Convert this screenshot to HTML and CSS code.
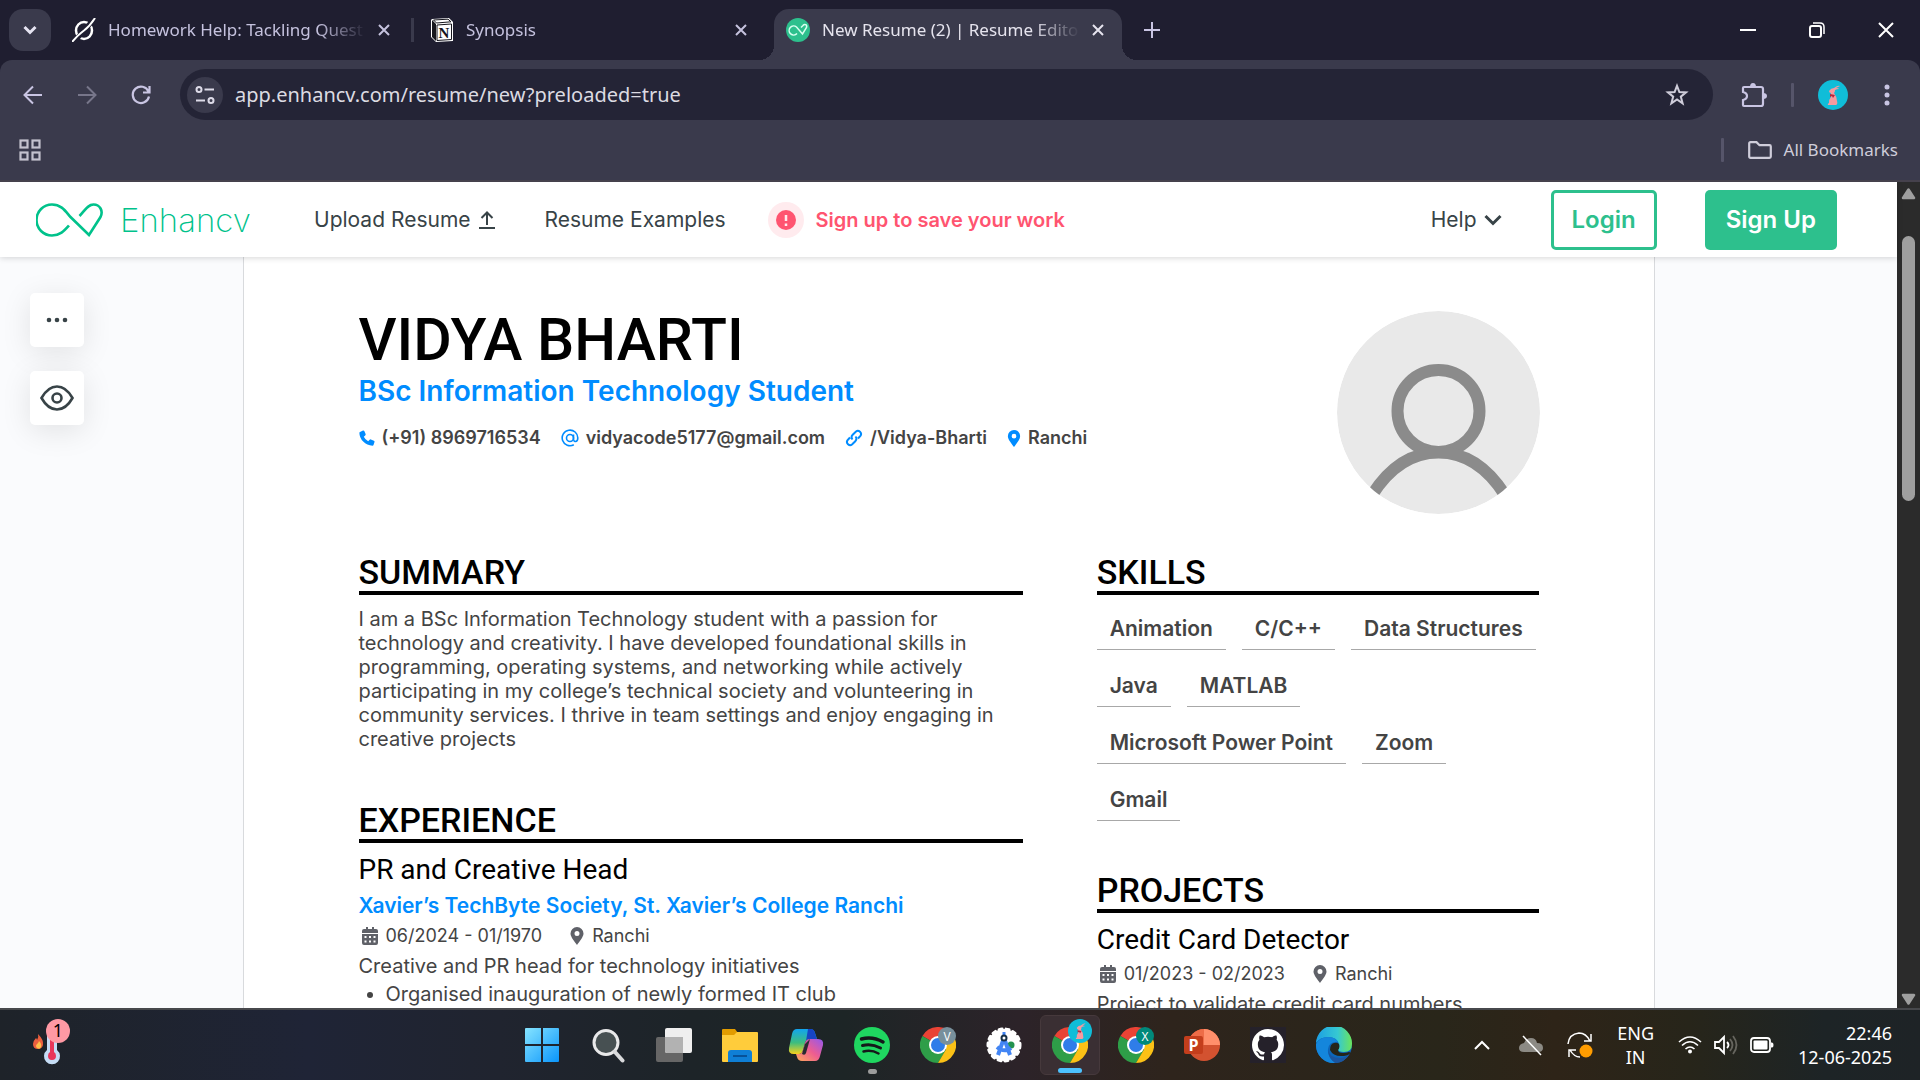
FILE: index.html
```html
<!DOCTYPE html>
<html lang="en">
<head>
<meta charset="utf-8">
<title>New Resume (2) | Resume Editor</title>
<link rel="stylesheet" href="styles.css">
</head>
<body>
<svg class="defs" width="0" height="0" aria-hidden="true">
  <symbol id="x" viewBox="0 0 14 14"><path d="M2 2l10 10M12 2L2 12" fill="none" stroke="currentColor" stroke-width="2"/></symbol>
  <symbol id="rabbit" viewBox="0 0 30 30"><circle cx="15" cy="15" r="15" fill="#10bdd8"/><path d="M11 11q2-3 5-3 4-3 6-2-2 1-4 2 3 0 3 1-2 0-4 1 0 2-1 3 3 4 3 8 1 3-1 4h-8q-1-1 1-2 0-4 2-6-1-2 0-4-2 0-2-2z" fill="#f79aa0"/><path d="M12 14l5 1-2 3-1-2-2 1z" fill="#b5283c"/></symbol>
  <symbol id="chrome" viewBox="0 0 36 36"><path d="M18 18L2.4 9A18 18 0 0 1 33.6 9z" fill="#ea4335"/><path d="M18 18L2.4 9A18 18 0 0 0 18 36l8-13z" fill="#2e9e48"/><path d="M18 9h15.600A18 18 0 0 1 18 36l8-13.500z" fill="#fbc116"/><circle cx="18" cy="18" r="9" fill="#fff"/><circle cx="18" cy="18" r="7" fill="#2f7de9"/></symbol>
  <symbol id="cal" viewBox="0 0 16 18"><path d="M4 0h2v2h4V0h2v2h2q2 0 2 2v2H0V4q0-2 2-2h2z" fill="#5f6168"/><path fill-rule="evenodd" d="M0 7h16v9q0 2-2 2H2q-2 0-2-2zM2.500 9v2h2V9zM7 9v2h2V9zM11.500 9v2h2V9zM2.500 13.500v2h2v-2zM7 13.500v2h2v-2zM11.500 13.500v2h2v-2z" fill="#5f6168"/></symbol>
  <symbol id="pin" viewBox="0 0 14 18"><path fill-rule="evenodd" d="M7 0a6.500 6.500 0 0 1 6.500 6.500C13.500 10 9 15 7 18 5 15 .5 10 .5 6.500A6.500 6.500 0 0 1 7 0zM7 4a2.500 2.500 0 1 0 0 5 2.500 2.500 0 0 0 0-5z" fill="currentColor"/></symbol>
</svg>

<div class="tabstrip">
  <button class="tab-search" aria-label="Search tabs"><svg width="14" height="10" viewBox="0 0 14 10"><path d="M1.500 2L7 7.500 12.500 2" fill="none" stroke="#e6e4f2" stroke-width="3"/></svg></button>
  <div class="tab">
    <svg class="fav" viewBox="0 0 24 24"><ellipse cx="12" cy="12.500" rx="8" ry="8.500" fill="none" stroke="#fff" stroke-width="2.500"/><path d="M22 1L2 24" stroke="#1f1e30" stroke-width="5"/><path d="M23 0Q18 8 12 12.500 7 16 0 24" fill="none" stroke="#fff" stroke-width="2"/></svg>
    <span class="tab-title">Homework Help: Tackling Quest</span>
    <button class="close" aria-label="Close tab"><svg width="14" height="14"><use href="#x"/></svg></button>
  </div>
  <div class="tab tab-second">
    <svg class="fav" viewBox="0 0 24 24"><path d="M2 1l17-1 4 4v19l-17 1-5-5V2z" fill="#fff"/><path d="M2 2l4 4v17l-4-4z" fill="#15151c"/><path d="M3.500 2L18 1.200 21 3.800 6.500 5z" fill="#fff" stroke="#15151c"/><path d="M7 7l14.500-1v15.500L7 22.500z" fill="#fff" stroke="#15151c"/><text x="14" y="20" text-anchor="middle" class="notion-n">N</text></svg>
    <span class="tab-title">Synopsis</span>
    <button class="close" aria-label="Close tab"><svg width="14" height="14"><use href="#x"/></svg></button>
  </div>
  <div class="tab active">
    <svg class="fav" viewBox="0 0 24 24"><circle cx="12" cy="12" r="12" fill="#2dc08d"/><path d="M11 15.500A4.500 4.500 0 1 1 10.500 9l6 7 4-6.500c1-3-2-4-3.500-2l-2 2" fill="none" stroke="#d8fff0" stroke-width="1.500"/></svg>
    <span class="tab-title">New Resume (2) | Resume Edito</span>
    <button class="close" aria-label="Close tab"><svg width="14" height="14"><use href="#x"/></svg></button>
  </div>
  <button class="new-tab" aria-label="New tab"><svg width="16" height="16" viewBox="0 0 16 16"><path d="M8 0v16M0 8h16" stroke="#c9c5e3" stroke-width="2"/></svg></button>
  <div class="window-controls">
    <button aria-label="Minimize"><svg width="16" height="16" viewBox="0 0 16 16"><path d="M0 8h16" stroke="#fff" stroke-width="2"/></svg></button>
    <button aria-label="Restore"><svg width="16" height="16" viewBox="0 0 16 16"><rect x="1" y="4" width="11" height="11" rx="2" fill="none" stroke="#fff" stroke-width="2"/><path d="M4 1h7q4 0 4 4v7" fill="none" stroke="#fff" stroke-width="1.500"/></svg></button>
    <button aria-label="Close"><svg width="16" height="16" viewBox="0 0 16 16"><path d="M1 1l14 14M15 1L1 15" stroke="#fff" stroke-width="2"/></svg></button>
  </div>
</div>

<div class="chrome-bar">
  <div class="toolbar">
    <button class="tool" aria-label="Back"><svg width="20" height="20" viewBox="0 0 20 20"><path d="M19 10H2M10 1.500L1.500 10l8.500 8.500" fill="none" stroke="#c9c5e3" stroke-width="2"/></svg></button>
    <button class="tool" aria-label="Forward"><svg width="20" height="20" viewBox="0 0 20 20"><path d="M1 10h17M10 1.500l8.500 8.500-8.500 8.500" fill="none" stroke="#77768a" stroke-width="2"/></svg></button>
    <button class="tool" aria-label="Reload"><svg width="20" height="20" viewBox="0 0 20 20"><path d="M17.500 6.500A8.200 8.200 0 1 0 18 11.500M18.500 1v6.500H12" fill="none" stroke="#c9c5e3" stroke-width="2.200"/></svg></button>
    <div class="omnibox">
      <button class="site" aria-label="Site information"><svg width="20" height="20" viewBox="0 0 20 20"><g fill="none" stroke="#dddbe8" stroke-width="2"><circle cx="4" cy="4.500" r="2.500"/><path d="M9.500 4.500H19M1 15.500h9"/><circle cx="16" cy="15.500" r="2.500"/></g></svg></button>
      <input type="text" aria-label="Address" value="app.enhancv.com/resume/new?preloaded=true">
      <button class="plain" aria-label="Bookmark"><svg width="24" height="24" viewBox="0 0 24 24"><path d="M12 2.800l2.400 6.300 6.600.3-5.200 4.200 1.800 6.700-5.600-3.800-5.600 3.800 1.800-6.700L3 9.400l6.600-.3z" fill="none" stroke="#cfcdda" stroke-width="2"/></svg></button>
    </div>
    <button class="plain ext" aria-label="Extensions"><svg width="26" height="26" viewBox="0 0 26 26"><path d="M3 5h17q2 0 2 2v15q0 2-2 2H3q-1 0-1-1v-5q4-1 4-4T2 10V6q0-1 1-1z" fill="none" stroke="#c9c5e3" stroke-width="2.200"/><path d="M9 5q0-4 3-4t3 4zM22 11q4 0 4 3t-4 3z" fill="#c9c5e3"/></svg></button>
    <span class="divider"></span>
    <button class="plain avatar" aria-label="Profile"><svg width="30" height="30"><use href="#rabbit"/></svg></button>
    <button class="plain menu" aria-label="Menu"><svg width="6" height="22" viewBox="0 0 6 22" fill="#c9c5e3"><circle cx="3" cy="3" r="2.500"/><circle cx="3" cy="11" r="2.500"/><circle cx="3" cy="19" r="2.500"/></svg></button>
  </div>
  <div class="bookmarks">
    <button class="plain" aria-label="Apps"><svg width="22" height="22" viewBox="0 0 22 22" fill="none" stroke="#c4c2ce" stroke-width="2.200"><rect x="1.500" y="1.500" width="7" height="7"/><rect x="13.500" y="1.500" width="7" height="7"/><rect x="1.500" y="13.500" width="7" height="7"/><rect x="13.500" y="13.500" width="7" height="7"/></svg></button>
    <span class="divider"></span>
    <button class="plain all"><svg width="24" height="18" viewBox="0 0 24 18"><path d="M1.200 15.500v-13q0-1.300 1.300-1.300h6l3 3h10q1.300 0 1.300 1.300v10q0 1.300-1.300 1.300h-19q-1.300 0-1.300-1.300z" fill="none" stroke="#cfcdda" stroke-width="2.200"/></svg>All Bookmarks</button>
  </div>
</div>

<main class="viewport">
  <div class="page">
    <header class="site-header">
      <a class="logo" href="#">
        <svg width="67" height="34" viewBox="0 0 67 34"><path d="M33 22.500C28 28 24 32.500 16 32.500A15.400 15.400 0 0 1 16 1.500c9 0 13 6 18 12l19 18.500L64.500 14C67.500 8 64 1.500 57.500 1.500c-6 0-9 6.500-14 11.500" fill="none" stroke="#00c28b" stroke-width="2.600"/></svg>
        <span>Enhancv</span>
      </a>
      <nav class="nav">
        <a href="#">Upload Resume <svg width="16" height="18" viewBox="0 0 16 18"><path d="M8 14V2M2.500 7L8 1.500 13.500 7M0 17h16" fill="none" stroke="#384347" stroke-width="2"/></svg></a>
        <a href="#">Resume Examples</a>
        <a class="alert" href="#"><svg width="36" height="36" viewBox="0 0 36 36"><circle cx="18" cy="18" r="18" fill="#ffebee"/><circle cx="18" cy="18" r="10" fill="#ff5470"/><path d="M18 13v6M18 21.500V24" stroke="#ffebee" stroke-width="2.500"/></svg>Sign up to save your work</a>
      </nav>
      <div class="account">
        <button class="help">Help <svg width="18" height="12" viewBox="0 0 18 12"><path d="M1.500 2L9 9.500 16.500 2" fill="none" stroke="#384347" stroke-width="3"/></svg></button>
        <button class="btn outline">Login</button>
        <button class="btn solid">Sign Up</button>
      </div>
    </header>

    <div class="workspace">
      <aside class="tools">
        <button aria-label="More"><svg width="22" height="6" viewBox="0 0 22 6" fill="#384347"><circle cx="3" cy="3" r="2.300"/><circle cx="11" cy="3" r="2.300"/><circle cx="19" cy="3" r="2.300"/></svg></button>
        <button aria-label="Preview"><svg width="34" height="26" viewBox="0 0 34 26" fill="none" stroke="#384347" stroke-width="2.600"><path d="M1.500 13Q8 1.500 17 1.500T32.500 13Q26 24.500 17 24.500T1.500 13z"/><circle cx="17" cy="13" r="4.500"/></svg></button>
      </aside>

      <article class="paper">
        <header class="intro">
          <div>
            <h1>VIDYA BHARTI</h1>
            <p class="role">BSc Information Technology Student</p>
            <ul class="contacts">
              <li><svg width="16" height="16" viewBox="0 0 16 16"><path d="M1 2l3-1.500q1-.3 1.300.6l1.300 3q.3.800-.4 1.300L4.800 6.800q1.400 3 4.400 4.400l1.400-1.500q.6-.6 1.300-.3l3 1.300q.9.400.6 1.300L14.500 15q-.2.800-1 .8Q8 15.500 4.200 11.600T.4 3Q.4 2.200 1 2z" fill="#008cff"/></svg>(+91) 8969716534</li>
              <li><svg width="18" height="18" viewBox="0 0 18 18"><g fill="none" stroke="#008cff" stroke-width="1.600"><circle cx="9" cy="9" r="3.500"/><path d="M12.500 5.500v5q.3 2 2 2 2.300-.3 2.300-3.500a7.800 7.800 0 1 0-4 6.700"/></g></svg>vidyacode5177@gmail.com</li>
              <li><svg width="18" height="18" viewBox="0 0 18 18"><path d="M7.500 10.500q-2-2.500.2-4.700l3.300-3.300q2-1.500 4 .3t.4 4L13 9.500M10.500 7.500q2 2.500-.2 4.700L7 15.500q-2 1.500-4-.3t-.4-4L5 8.500" fill="none" stroke="#008cff" stroke-width="2"/></svg>/Vidya-Bharti</li>
              <li class="place"><svg width="14" height="17"><use href="#pin"/></svg>Ranchi</li>
            </ul>
          </div>
          <svg class="photo" viewBox="0 0 203 203"><defs><clipPath id="disc"><circle cx="101.500" cy="101.500" r="101.500"/></clipPath></defs><g clip-path="url(#disc)"><circle cx="101.500" cy="101.500" r="101.500" fill="#e9e9e9"/><g fill="none" stroke="#8b8b8b" stroke-width="12"><circle cx="101.500" cy="100" r="41"/><path d="M35 184Q62 141.500 101.500 141.500T168 184"/></g></g></svg>
        </header>

        <div class="columns">
          <div class="column">
            <section>
              <h2>SUMMARY</h2>
              <p class="summary">I am a BSc Information Technology student with a passion for technology and creativity. I have developed foundational skills in programming, operating systems, and networking while actively participating in my college’s technical society and volunteering in community services. I thrive in team settings and enjoy engaging in creative projects</p>
            </section>
            <section>
              <h2>EXPERIENCE</h2>
              <h3>PR and Creative Head</h3>
              <p class="company">Xavier’s TechByte Society, St. Xavier’s College Ranchi</p>
              <div class="meta"><span><svg width="16" height="18"><use href="#cal"/></svg>06/2024 - 01/1970</span><span><svg width="14" height="18"><use href="#pin"/></svg>Ranchi</span></div>
              <p class="detail">Creative and PR head for technology initiatives</p>
              <ul class="points"><li>Organised inauguration of newly formed IT club</li></ul>
            </section>
          </div>
          <div class="column">
            <section>
              <h2>SKILLS</h2>
              <ul class="skills"><li>Animation</li><li>C/C++</li><li>Data Structures</li><li>Java</li><li>MATLAB</li><li>Microsoft Power Point</li><li>Zoom</li><li>Gmail</li></ul>
            </section>
            <section>
              <h2>PROJECTS</h2>
              <h3>Credit Card Detector</h3>
              <div class="meta"><span><svg width="16" height="18"><use href="#cal"/></svg>01/2023 - 02/2023</span><span><svg width="14" height="18"><use href="#pin"/></svg>Ranchi</span></div>
              <p class="detail">Project to validate credit card numbers</p>
            </section>
          </div>
        </div>
      </article>
    </div>
  </div>
  <div class="scrollbar">
    <svg width="15" height="12" viewBox="0 0 15 12"><path d="M7.500 1.500L13 10H2z" fill="#9f9f9f" stroke="#9f9f9f" stroke-width="2.500" stroke-linejoin="round"/></svg>
    <span class="thumb"></span>
    <svg width="15" height="12" viewBox="0 0 15 12"><path d="M7.500 10.500L13 2H2z" fill="#9f9f9f" stroke="#9f9f9f" stroke-width="2.500" stroke-linejoin="round"/></svg>
  </div>
</main>

<footer class="taskbar">
  <div class="widgets">
    <button aria-label="Weather">
      <svg width="50" height="50" viewBox="0 0 50 50"><path d="M13 16q6 6 5 11-1 4-5 4-5 0-5-5 0-3 3-6 1 1 1 2 2-3 1-6z" fill="#ec5f3f"/><path d="M14 23q3 3 2 6t-4 1q-2-2 0-4 1 0 2-3z" fill="#ffc04a"/><path d="M22 10q0-4 5-4t5 4v22a8 8 0 1 1-10 0z" fill="#c5dcf5"/><path d="M25 14h4v20q2 1 2 4a4 4 0 1 1-8 0q0-3 2-4z" fill="#e8365a"/><circle cx="33" cy="13" r="12" fill="#ff99a4"/><text x="33" y="19" text-anchor="middle" class="count">1</text></svg>
    </button>
  </div>
  <div class="apps">
    <button aria-label="Start"><svg width="36" height="36" viewBox="0 0 36 36"><defs><linearGradient id="win" x2="1" y2="1"><stop stop-color="#86e4ff"/><stop offset="1" stop-color="#0a95fb"/></linearGradient></defs><path d="M2 1h15v16H1V2q0-1 1-1zM19 1h15q1 0 1 1v15H19zM1 19h16v16H2q-1 0-1-1zM19 19h16v15q0 1-1 1H19z" fill="url(#win)"/></svg></button>
    <button aria-label="Search"><svg width="36" height="36" viewBox="0 0 36 36"><circle cx="16" cy="15.500" r="12" fill="#475052" stroke="#e9e9ea" stroke-width="3"/><path d="M24.500 24.500l8 9" stroke="#d9dadc" stroke-width="4" stroke-linecap="round"/></svg></button>
    <button aria-label="Task view"><svg width="36" height="36" viewBox="0 0 36 36"><rect y="10" width="27" height="25" rx="2" fill="#666"/><rect x="9" y="1" width="27" height="25" rx="2" fill="#efefef"/><path d="M9 10h18v16H11q-2 0-2-2z" fill="#b2b2b2"/></svg></button>
    <button aria-label="File Explorer"><svg width="36" height="36" viewBox="0 0 36 36"><path d="M0 3q0-1 1-1h12l3 4v4H0z" fill="#e29c00"/><path d="M0 8h12l3-3h20q1 0 1 1v28q0 1-1 1H1q-1 0-1-1z" fill="#ffcc3b"/><path d="M6 35V26q0-3 3-3h18q3 0 3 3v9z" fill="#0f7fd6"/><path d="M11 29h14" stroke="#075299" stroke-width="2"/></svg></button>
    <button aria-label="Copilot"><svg width="36" height="36" viewBox="0 0 36 36"><defs><linearGradient id="cpa" x1="0" y1="0" x2="0" y2="1"><stop stop-color="#12a4ef"/><stop offset=".55" stop-color="#3dbd7e"/><stop offset="1" stop-color="#f8d21c"/></linearGradient><linearGradient id="cpb" x1="1" y1="0" x2="0" y2="1"><stop stop-color="#9358ee"/><stop offset=".5" stop-color="#ee5d91"/><stop offset="1" stop-color="#ffab58"/></linearGradient></defs><path d="M9 2h13q4 0 5 4l2 6h-7q-4 0-5 4l-2 7q-1 4-4 4H6q-6 0-5-6L4 7q1-5 5-5z" fill="url(#cpa)"/><path d="M20 2h3q3 0 4 4l2 6h-7q-3 0-4 2z" fill="#1744c4"/><path d="M27 34H14q-4 0-5-4l-1-3h3q3 0 4-4l2-7q1-4 5-4h8q6 0 5 6l-3 11q-1 5-5 5z" fill="url(#cpb)"/><path d="M17 17l5-5-4 14q-1 3-4 1z" fill="#292a31"/></svg></button>
    <button aria-label="Spotify" class="running"><svg width="36" height="36" viewBox="0 0 36 36"><circle cx="18" cy="18" r="18" fill="#1fd760"/><g fill="none" stroke="#15191a" stroke-linecap="round"><path d="M7.500 12q11-3 21.500 3" stroke-width="3.500"/><path d="M8.500 18.500q9-2.500 18 2.500" stroke-width="3"/><path d="M9.500 24.500q8-2 15 2" stroke-width="2.500"/></g></svg></button>
    <button aria-label="Chrome profile V"><svg width="36" height="36" viewBox="0 0 36 36"><use href="#chrome"/><circle cx="27" cy="9" r="9" fill="#78909c"/><text x="27" y="13.500" text-anchor="middle" class="mark">V</text></svg></button>
    <button aria-label="Android Studio"><svg width="36" height="36" viewBox="0 0 36 36"><circle cx="18" cy="18" r="16" fill="#fff"/><circle cx="18" cy="18" r="16" fill="none" stroke="#fff" stroke-width="3" stroke-linecap="round" stroke-dasharray="3 4"/><circle cx="25" cy="18" r="3.500" fill="#23924f"/><path d="M18 11L12 28M18 11l6 17M11 20q7 6 14 1" fill="none" stroke="#4285f4" stroke-width="4"/><path d="M18 5v4" stroke="#4285f4" stroke-width="3"/><circle cx="18" cy="11" r="2.500" fill="#fff" stroke="#173047" stroke-width="2"/></svg></button>
    <button aria-label="Chrome" class="current"><svg width="44" height="44" viewBox="0 0 44 44"><use href="#chrome" x="4" y="8" width="36" height="36"/><use href="#rabbit" x="20" y="0" width="24" height="24"/></svg></button>
    <button aria-label="Chrome profile X"><svg width="36" height="36" viewBox="0 0 36 36"><use href="#chrome"/><circle cx="27" cy="9" r="9" fill="#00897b"/><text x="27" y="13.500" text-anchor="middle" class="mark">X</text></svg></button>
    <button aria-label="PowerPoint"><svg width="36" height="36" viewBox="0 0 36 36"><circle cx="20" cy="18" r="16" fill="#d35230"/><path d="M20 2a16 16 0 0 0-16 16h16z" fill="#ed6c47"/><path d="M20 2a16 16 0 0 1 16 16H20z" fill="#ff8f6b"/><rect y="9" width="19" height="18" rx="2" fill="#c43e1c"/><text x="9.500" y="24" text-anchor="middle" class="ppt">P</text></svg></button>
    <button aria-label="GitHub"><svg width="36" height="36" viewBox="0 0 36 36"><rect width="36" height="36" fill="#25212a"/><g transform="translate(2 2) scale(2)"><path fill="#fff" d="M8 0C3.580 0 0 3.580 0 8c0 3.540 2.290 6.530 5.470 7.590.4.070.55-.17.55-.38 0-.19-.01-.82-.01-1.490-2.010.37-2.530-.49-2.690-.94-.09-.23-.48-.94-.82-1.130-.28-.15-.68-.52-.01-.53.63-.01 1.080.58 1.230.82.72 1.210 1.870.87 2.330.66.070-.52.28-.87.51-1.070-1.780-.2-3.640-.89-3.640-3.950 0-.87.310-1.590.82-2.150-.08-.2-.36-1.020.08-2.120 0 0 .67-.21 2.200.82.64-.18 1.320-.27 2-.27s1.360.09 2 .27c1.530-1.040 2.200-.82 2.200-.82.44 1.100.16 1.920.08 2.120.51.56.82 1.270.82 2.150 0 3.070-1.870 3.750-3.650 3.950.29.25.54.73.54 1.480 0 1.070-.01 1.930-.01 2.200 0 .21.150.46.550.38A8.010 8.010 0 0 0 16 8c0-4.420-3.580-8-8-8z"/></g></svg></button>
    <button aria-label="Edge"><svg width="36" height="36" viewBox="0 0 36 36"><defs><linearGradient id="edge"><stop stop-color="#1c9fe4"/><stop offset=".6" stop-color="#36c8d2"/><stop offset="1" stop-color="#6be45b"/></linearGradient></defs><circle cx="18" cy="18" r="18" fill="#0c66ba"/><path d="M0 16A18 18 0 0 1 36 17q0 8-8 8-6 0-6-3 2-2 1-5Q21 10 12 10 4 10 0 16z" fill="url(#edge)"/><path d="M0 17Q4 10 12 10q7 0 10 5-9-1-10 7-1 9 8 14A18 18 0 0 1 0 17z" fill="#1486dc"/><path d="M14 23q0-6 4-7 3-1 5 1 1 4-1 6 0 3 5 3 3 0 6-1 2 0 1 2-3 2-9 2-8 0-11-6z" fill="#25251a"/><path d="M12 22q1 9 12 9 6 0 10-5-5 10-15 10-7-5-7-14z" fill="#1b559f"/></svg></button>
  </div>
  <div class="tray">
    <button class="plain" aria-label="Show hidden icons"><svg width="26" height="24" viewBox="0 0 26 24"><path d="M6 16l7-7 7 7" fill="none" stroke="#fff" stroke-width="2"/></svg></button>
    <svg width="24" height="24" viewBox="0 0 24 24"><path d="M5 19q-5 0-5-4t5-5q2-5 7-5t6 5q6 0 6 5 0 4-5 4z" fill="#8c8a84"/><path d="M4 3l18 19" stroke="#fff" stroke-width="1.500"/></svg>
    <svg width="26" height="26" viewBox="0 0 26 26"><path d="M1 12Q2 2 12 1q7 0 11 8M24 2v7h-7M2 25v-7h7M3 18q4 7 10 7" fill="none" stroke="#fff" stroke-width="1.500"/><circle cx="19" cy="19" r="6.500" fill="#ff9c00"/></svg>
    <button class="plain lang">ENG<br>IN</button>
    <button class="plain status" aria-label="Network, volume and battery">
      <svg width="24" height="24" viewBox="0 0 24 24"><g fill="none" stroke="#fff" stroke-width="1.600"><path d="M1 9q11-10 22 0M4 12.500q8-7.500 16 0M7.500 16q4.500-4 9 0"/></g><circle cx="12" cy="18.500" r="2" fill="#fff"/></svg>
      <svg width="24" height="24" viewBox="0 0 24 24"><path d="M1 9h4l5-5v16l-5-5H1zM13 9q3 3 0 6" fill="none" stroke="#fff" stroke-width="1.800"/><path d="M16 6q5 6 0 12M19 3q7 9 0 18" fill="none" stroke="#66655e" stroke-width="1.800"/></svg>
      <svg width="24" height="24" viewBox="0 0 24 24"><rect x="1" y="5" width="19" height="14" rx="3" fill="none" stroke="#fff" stroke-width="1.800"/><rect x="3.500" y="7.500" width="14" height="9" rx="1" fill="#fff"/><path d="M21 9.500h1q1.500 0 1.500 2.500T22 14.500h-1z" fill="#fff"/></svg>
    </button>
    <button class="plain clock">22:46<br>12-06-2025</button>
  </div>
</footer>
</body>
</html>
```
FILE: styles.css
```css
* { box-sizing: border-box; }
body {
  margin: 0;
  height: 100vh;
  display: flex;
  flex-direction: column;
  overflow: hidden;
  background: #1f1e30;
  font-family: "Inter", "Liberation Sans", sans-serif;
  color: #444;
}
h1, h2, h3, p, ul { margin: 0; padding: 0; }
ul { list-style: none; }
button { font: inherit; color: inherit; border: 0; padding: 0; background: none; }
a { color: inherit; text-decoration: none; }
svg { display: block; flex: none; }
.defs { position: absolute; }
.plain { display: flex; align-items: center; }

/* Tab strip */
.tabstrip {
  flex: none;
  height: 60px;
  display: flex;
  align-items: center;
  padding-left: 9px;
  font: 17px/24px "Noto Sans", "Open Sans", sans-serif;
  color: #c5c2de;
}
.tab-search {
  width: 42px;
  height: 42px;
  border-radius: 14px;
  background: #3a3a4c;
  display: grid;
  place-items: center;
}
.tab { display: flex; align-items: center; width: 351px; padding-left: 21px; }
.fav { width: 24px; height: 24px; margin-right: 12px; }
.tab-title {
  flex: 1;
  overflow: hidden;
  white-space: nowrap;
  mask-image: linear-gradient(to right, #000 calc(100% - 48px), transparent);
}
.close { width: 36px; display: grid; place-items: center; }
.tab-second { width: 363px; padding-left: 16px; border-left: 3px solid #3a3a4c; height: 24px; margin-left: 9px; padding-right: 15px; }
.active {
  position: relative;
  align-self: stretch;
  width: 348px;
  margin-top: 9px;
  padding: 0 6px 9px 12px;
  border-radius: 15px 15px 0 0;
  background: #3a3a4c;
  color: #e6e4ee;
}
.active::before, .active::after {
  content: "";
  position: absolute;
  bottom: 0;
  width: 15px;
  height: 15px;
}
.active::before { right: 100%; background: radial-gradient(circle at 0 0, transparent 15px, #3a3a4c 15px); }
.active::after { left: 100%; background: radial-gradient(circle at 100% 0, transparent 15px, #3a3a4c 15px); }
.new-tab { margin-left: 22px; }
.window-controls { display: flex; margin-left: auto; }
.window-controls button { width: 69px; display: grid; place-items: center; }
.notion-n { font: bold 15px "Liberation Serif", serif; fill: #15151c; }

/* Address and bookmark bars */
.chrome-bar {
  flex: none;
  height: 122px;
  padding-top: 9px;
  background: #3a3a4c;
  border-bottom: 2px solid #45414c;
  border-radius: 12px 12px 0 0;
  font: 17px/24px "Noto Sans", "Open Sans", sans-serif;
  color: #cfcdda;
}
.toolbar { display: flex; align-items: center; padding: 0 30px 0 6px; }
.tool { width: 54px; height: 51px; display: grid; place-items: center; }
.omnibox {
  flex: 1;
  height: 51px;
  display: flex;
  align-items: center;
  margin-left: 12px;
  padding: 0 24px 0 7px;
  border-radius: 26px;
  background: #242436;
}
.site { width: 36px; height: 36px; border-radius: 18px; background: #3a3a4c; display: grid; place-items: center; }
.omnibox input {
  flex: 1;
  min-width: 0;
  margin-left: 12px;
  padding: 0;
  border: 0;
  background: none;
  font: 20px/28px "Noto Sans", "Open Sans", sans-serif;
  color: #dcdbe2;
}
.ext { margin-left: 28px; }
.divider { width: 3px; height: 24px; border-radius: 1px; background: #56556a; }
.toolbar .divider { margin: 0 24px; }
.menu { margin-left: 36px; }
.bookmarks { display: flex; align-items: center; height: 60px; padding: 0 22px 0 19px; }
.bookmarks .divider { margin-left: auto; }
.all { gap: 12px; margin-left: 24px; }

/* Page */
.viewport { flex: 1; min-height: 0; display: flex; overflow: hidden; }
.page { flex: 1; min-width: 0; display: flex; flex-direction: column; background: #fafbfd; }
.site-header {
  position: relative;
  flex: none;
  height: 75px;
  display: flex;
  align-items: center;
  padding: 0 60px 0 36px;
  background: #fff;
  box-shadow: 0 1px 6px rgba(0, 0, 0, .16);
  font-size: 21px;
  line-height: 24px;
  color: #384347;
}
.logo { width: 278px; display: flex; align-items: center; gap: 17px; color: #00c28b; font: 200 33px/36px "Inter", sans-serif; }
.nav { display: flex; align-items: center; gap: 50px; }
.nav a { display: flex; align-items: center; gap: 8px; white-space: nowrap; }
.nav .alert { gap: 12px; margin-left: -8px; color: #ff5470; font-size: 20px; font-weight: 600; }
.account { display: flex; align-items: center; margin-left: auto; }
.help { display: flex; align-items: center; gap: 7px; margin-right: 49px; }
.btn { height: 60px; padding: 0 21px; border-radius: 5px; font-size: 24px; font-weight: 600; }
.outline { padding: 0 18px; border: 3px solid #2dc08d; color: #2dc08d; margin-right: 48px; }
.solid { background: #2dc08d; color: #fff; }

.workspace {
  flex: 1;
  min-height: 0;
  display: grid;
  grid-template-columns: 1fr minmax(0, 1412px) 1fr;
}
.tools { display: flex; flex-direction: column; gap: 24px; padding: 36px 0 0 30px; }
.tools button {
  width: 54px;
  height: 54px;
  display: grid;
  place-items: center;
  border-radius: 5px;
  background: #fff;
  box-shadow: 0 6px 30px rgba(0, 0, 0, .1);
}
.paper {
  min-height: 0;
  padding: 54px 114px 0 115px;
  background: #fff;
  border: 1px solid #d8dadd;
  border-width: 0 1px;
  overflow: hidden;
}
.intro { display: flex; justify-content: space-between; }
.photo { width: 203px; height: 203px; }
h1 { font: 500 59px/58px Roboto, sans-serif; color: #000; }
.role { margin-top: 5px; font-size: 28px; line-height: 34px; font-weight: 600; color: #008cff; }
.contacts { display: flex; gap: 20px; margin-top: 18px; font-size: 18px; font-weight: 600; line-height: 24px; }
.contacts li { display: flex; align-items: center; gap: 7px; }
.contacts svg { color: #008cff; }
.columns { display: grid; grid-template-columns: 3fr 2fr; gap: 74px; margin-top: 40px; }
.column { display: flex; flex-direction: column; gap: 51px; min-width: 0; }
h2 { padding-bottom: 1px; border-bottom: 4px solid #000; font: 500 34px/36px Roboto, sans-serif; color: #000; }
h3 { margin-top: 11px; font: 400 28px/32px Roboto, sans-serif; color: #000; }
.summary { margin-top: 12px; font-size: 20px; line-height: 24px; }
.company { margin-top: 8px; font-size: 21px; line-height: 24px; font-weight: 600; color: #008cff; }
.meta { display: flex; gap: 28px; margin-top: 7px; padding-left: 3px; font-size: 18px; line-height: 22px; }
.meta span { display: flex; align-items: center; gap: 8px; }
.meta svg { color: #5f6168; }
.detail { margin-top: 7px; font-size: 20px; line-height: 24px; }
.points { margin-top: 4px; padding-left: 27px; list-style: disc; font-size: 20px; line-height: 24px; }
.skills { display: flex; flex-wrap: wrap; gap: 20px 16px; margin-top: 18px; font-size: 21px; font-weight: 600; line-height: 24px; }
.skills li { padding: 4px 13px 8px; border-bottom: 1px solid #a8a8a8; }

.scrollbar {
  flex: none;
  width: 23px;
  display: flex;
  flex-direction: column;
  align-items: center;
  padding: 6px 0 3px;
  background: #2b2b2b;
}
.thumb { width: 13px; height: 265px; margin: 36px 0 auto; border-radius: 7px; background: #9f9f9f; }

/* Taskbar */
.taskbar {
  flex: none;
  height: 72px;
  display: flex;
  align-items: center;
  padding-right: 28px;
  border-top: 2px solid #47484c;
  background: linear-gradient(to right, #1e2329 0, #1f2436 16%, #20242f 26%, #1d2428 36%, #1d2526 44%, #2c2329 53%, #2e241c 61%, #29261a 75%, #2e2418 81%, #27251a 88%, #1d2426 95%, #1e2326 100%);
  font: 18px/24px "Noto Sans", "Open Sans", sans-serif;
  color: #fff;
}
.widgets { width: 512px; padding-left: 25px; }
.apps { display: flex; gap: 6px; }
.apps button { position: relative; width: 60px; height: 60px; display: grid; place-items: center; border-radius: 6px; }
.apps .current { background: #3a2f33; border: 1px solid #46393c; padding-bottom: 8px; }
.current::after, .running::after {
  content: "";
  position: absolute;
  bottom: 1px;
  width: 24px;
  height: 5px;
  border-radius: 3px;
  background: #4cc2ff;
}
.running::after { width: 9px; background: #9c9c9c; }
.count { font: 18px "Noto Sans", sans-serif; }
.mark { font: 12px "Open Sans", sans-serif; fill: #fff; }
.ppt { font: bold 16px "Open Sans", sans-serif; fill: #fff; }
.tray { display: flex; align-items: center; margin-left: auto; gap: 24px; }
.tray .lang { text-align: center; }
.status { gap: 12px; }
.clock { text-align: right; white-space: nowrap; }
```
